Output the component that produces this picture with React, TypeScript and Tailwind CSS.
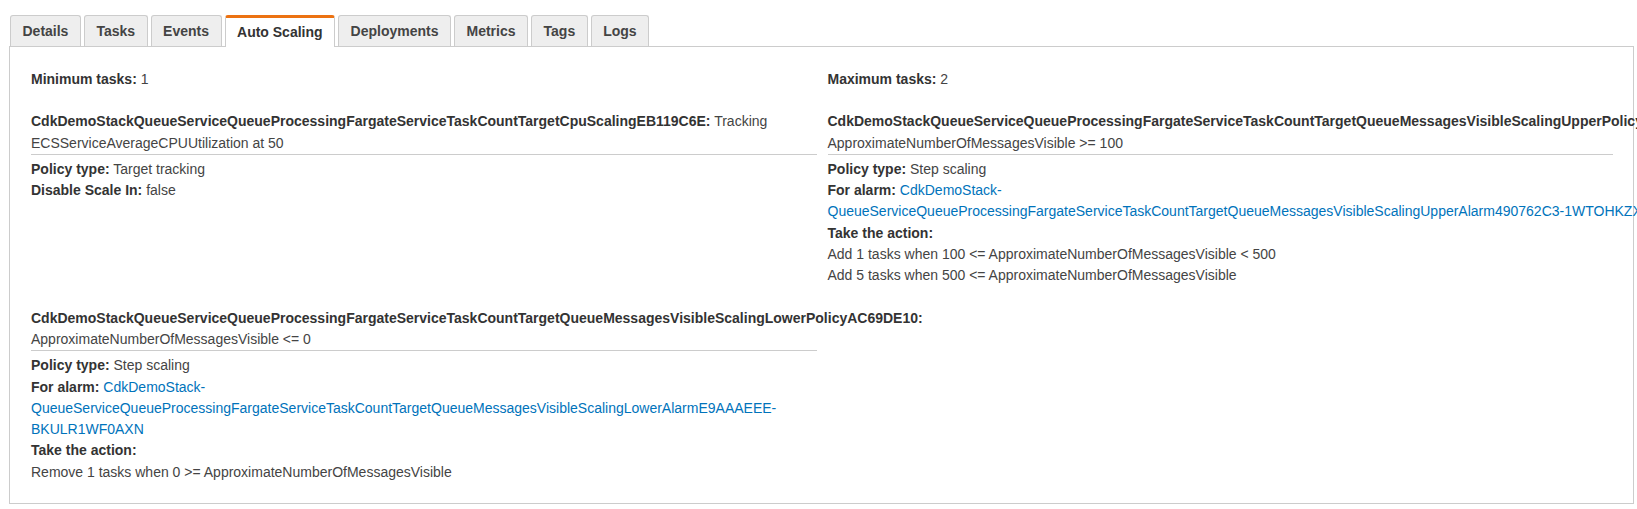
import React from "react";

const tabs = ["Details", "Tasks", "Events", "Auto Scaling", "Deployments", "Metrics", "Tags", "Logs"];

function Label({ children }: { children: React.ReactNode }) {
    return <span className="font-bold text-[#333]">{children}</span>;
}

function PolicyHeading({ name, desc }: { name: string; desc: string }) {
    return (
        <div className="border-b border-[#cccccc] mb-[4px]">
            <Label>{name}:</Label> {desc}
        </div>
    );
}

export default function App() {
    return (
        <div
            className="w-full overflow-hidden bg-white pt-[15px] pl-[9px] pr-[3px] pb-[8px] text-[14px] leading-[21.3px] text-[#444]"
            style={{ fontFamily: '"Liberation Sans", Arial, sans-serif' }}
        >
            {/* Tabs */}
            <div className="flex items-end gap-[3px] pl-[1px]">
                {tabs.map((t) => {
                    const active = t === "Auto Scaling";
                    return active ? (
                        <div
                            key={t}
                            className="relative z-10 -mb-[1px] h-[32px] rounded-t-[3px] border-x border-t-[3px] border-x-[#cccccc] border-t-[#ec7211] bg-white px-[11.5px] pt-[4px] text-[14px] font-bold text-[#333]"
                        >
                            {t}
                        </div>
                    ) : (
                        <div
                            key={t}
                            className="h-[31px] rounded-t-[3px] border-x border-t border-[#cccccc] bg-[#eeeeee] px-[11.5px] pt-[5px] text-[14px] font-bold text-[#444]"
                        >
                            {t}
                        </div>
                    );
                })}
            </div>

            {/* Panel */}
            <div className="border border-[#cccccc] pl-[21px] pr-[20px] pt-[22px] pb-[20px]">
                <div className="grid grid-cols-2 gap-x-[11px] gap-y-[21px]">
                    <div>
                        <Label>Minimum tasks:</Label> 1
                    </div>
                    <div>
                        <Label>Maximum tasks:</Label> 2
                    </div>

                    <div>
                        <PolicyHeading
                            name="CdkDemoStackQueueServiceQueueProcessingFargateServiceTaskCountTargetCpuScalingEB119C6E"
                            desc="Tracking ECSServiceAverageCPUUtilization at 50"
                        />
                        <div>
                            <Label>Policy type:</Label> Target tracking
                        </div>
                        <div>
                            <Label>Disable Scale In:</Label> false
                        </div>
                    </div>

                    <div>
                        <PolicyHeading
                            name="CdkDemoStackQueueServiceQueueProcessingFargateServiceTaskCountTargetQueueMessagesVisibleScalingUpperPolicy3C8C9AB8"
                            desc="ApproximateNumberOfMessagesVisible >= 100"
                        />
                        <div>
                            <Label>Policy type:</Label> Step scaling
                        </div>
                        <div>
                            <Label>For alarm:</Label>{" "}
                            <a className="text-[#0073bb]">
                                CdkDemoStack-QueueServiceQueueProcessingFargateServiceTaskCountTargetQueueMessagesVisibleScalingUpperAlarm
                                <span className="whitespace-nowrap">490762C3-1WTOHKZXQ8N9L</span>
                            </a>
                        </div>
                        <div>
                            <Label>Take the action:</Label>
                        </div>
                        <div>Add 1 tasks when 100 &lt;= ApproximateNumberOfMessagesVisible &lt; 500</div>
                        <div>Add 5 tasks when 500 &lt;= ApproximateNumberOfMessagesVisible</div>
                    </div>

                    <div>
                        <PolicyHeading
                            name="CdkDemoStackQueueServiceQueueProcessingFargateServiceTaskCountTargetQueueMessagesVisibleScalingLowerPolicyAC69DE10"
                            desc="ApproximateNumberOfMessagesVisible <= 0"
                        />
                        <div>
                            <Label>Policy type:</Label> Step scaling
                        </div>
                        <div>
                            <Label>For alarm:</Label>{" "}
                            <a className="text-[#0073bb]">
                                CdkDemoStack-QueueServiceQueueProcessingFargateServiceTaskCountTargetQueueMessagesVisibleScalingLowerAlarmE9AAAEEE-BKULR1WF0AXN
                            </a>
                        </div>
                        <div>
                            <Label>Take the action:</Label>
                        </div>
                        <div>Remove 1 tasks when 0 &gt;= ApproximateNumberOfMessagesVisible</div>
                    </div>
                </div>
            </div>
        </div>
    );
}
